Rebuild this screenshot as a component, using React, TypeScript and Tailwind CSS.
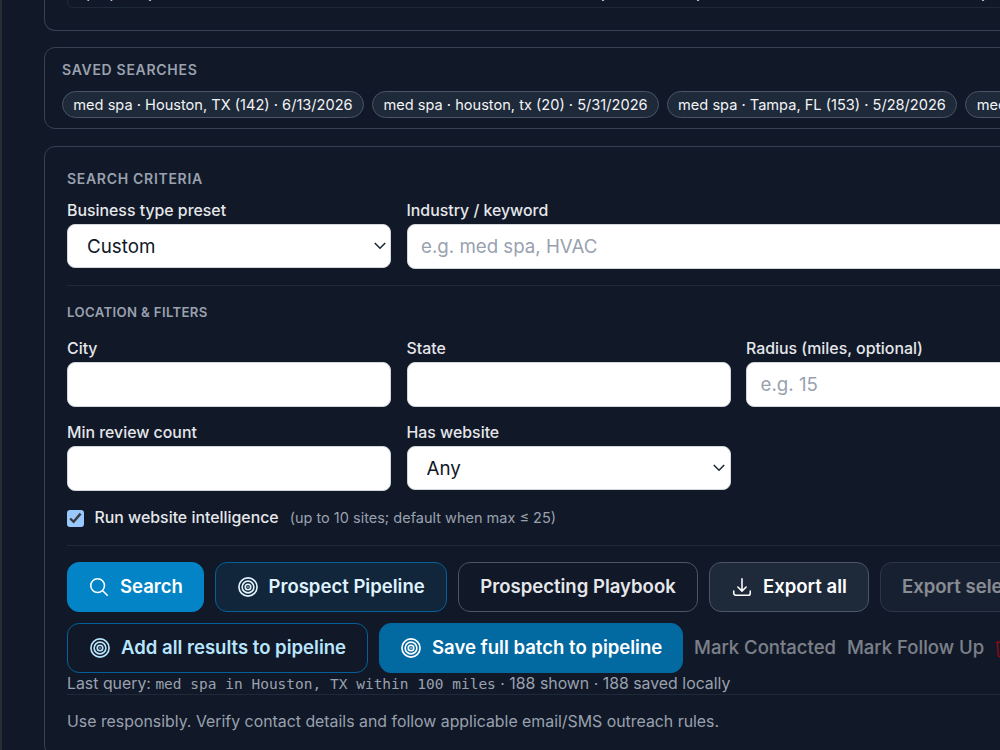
import React from "react";

const savedSearches = [
  { label: "med spa · Houston, TX (142) · 6/13/2026", width: "w-[302px]" },
  { label: "med spa · houston, tx (20) · 5/31/2026", width: "w-[287px]" },
  { label: "med spa · Tampa, FL (153) · 5/28/2026", width: "w-[290px]" },
  { label: "med spa · Austin, TX (120) · 5/27/2026", width: "w-[290px]" },
];

const TargetIcon = () => (
  <svg width="22" height="22" viewBox="0 0 24 24" fill="none" stroke="currentColor" strokeWidth="1.8" className="shrink-0">
    <circle cx="12" cy="12" r="9.9" />
    <circle cx="12" cy="12" r="6.4" />
    <circle cx="12" cy="12" r="3" />
    <circle cx="12" cy="12" r="0.9" fill="currentColor" stroke="none" />
  </svg>
);

const SearchIcon = () => (
  <svg width="22" height="22" viewBox="0 0 24 24" fill="none" stroke="currentColor" strokeWidth="1.7" strokeLinecap="round" strokeLinejoin="round" className="shrink-0">
    <path d="m21 21-5.197-5.197m0 0A7.5 7.5 0 1 0 5.196 5.196a7.5 7.5 0 0 0 10.607 10.607Z" />
  </svg>
);

const DownloadIcon = () => (
  <svg width="22" height="22" viewBox="0 0 24 24" fill="none" stroke="currentColor" strokeWidth="1.7" strokeLinecap="round" strokeLinejoin="round" className="shrink-0">
    <path d="M3 16.5v2.25A2.25 2.25 0 0 0 5.25 21h13.5A2.25 2.25 0 0 0 21 18.75V16.5M16.5 12 12 16.5m0 0L7.5 12m4.5 4.5V3" />
  </svg>
);

const TrashIcon = () => (
  <svg width="22" height="22" viewBox="0 0 24 24" fill="none" stroke="currentColor" strokeWidth="1.6" strokeLinecap="round" strokeLinejoin="round" className="shrink-0">
    <path d="m14.74 9-.346 9m-4.788 0L9.26 9m9.968-3.21c.342.052.682.107 1.022.166m-1.022-.165L18.16 19.673a2.25 2.25 0 0 1-2.244 2.077H8.084a2.25 2.25 0 0 1-2.244-2.077L4.772 5.79m14.456 0a48.108 48.108 0 0 0-3.478-.397m-12 .562c.34-.059.68-.114 1.022-.165m0 0a48.11 48.11 0 0 1 3.478-.397m7.5 0v-.916c0-1.18-.91-2.164-2.09-2.201a51.964 51.964 0 0 0-3.32 0c-1.18.037-2.09 1.022-2.09 2.201v.916m7.5 0a48.667 48.667 0 0 0-7.5 0" />
  </svg>
);

const Label = ({ children }: { children: React.ReactNode }) => (
  <span className="block h-[26px] text-[15.87px] leading-[26px] font-medium text-gray-200">{children}</span>
);

const TextField = ({ label, placeholder }: { label: string; placeholder?: string }) => (
  <label className="block">
    <Label>{label}</Label>
    <input
      type="text"
      placeholder={placeholder}
      className="block h-[45px] w-full rounded-lg border border-gray-300 bg-white px-[13.5px] text-[18.7px] text-gray-900 placeholder:text-gray-400"
    />
  </label>
);

const SelectField = ({ label, value }: { label: string; value: string }) => (
  <label className="block">
    <Label>{label}</Label>
    <span className="relative block">
      <select className="block h-[44px] w-full appearance-none rounded-lg border border-gray-300 bg-white px-[19px] pt-[2px] text-[18.8px] text-gray-900">
        <option>{value}</option>
      </select>
      <svg width="12" height="8" viewBox="0 0 12 8" fill="none" stroke="#1f2937" strokeWidth="1.6" className="pointer-events-none absolute top-[18px] right-[5.5px]">
        <path d="M0.8 1 6 6.2 11.2 1" />
      </svg>
    </span>
  </label>
);

const buttonBase = "flex h-[50px] shrink-0 items-center rounded-xl border text-[18.55px] font-semibold whitespace-nowrap";

export default function App() {
  return (
    <div className="h-[750px] w-[1000px] overflow-hidden border-l-2 border-[#282c33] bg-[#111827] font-['Inter',sans-serif] text-gray-200">
      <div className="ml-[42px] w-[1049px]">
        <div className="h-[31px] rounded-b-[11px] border border-t-0 border-gray-700 px-[22px]">
          <div className="h-[8px] overflow-hidden rounded-b-md border border-t-0 border-gray-800">
            <div className="-mt-5 flex text-[16px] leading-[24px] whitespace-nowrap text-gray-200">
              <span className="w-[32px] pl-[12px]">1,</span>
              <span className="w-[48px]">2,</span>
              <span className="w-[389px]">p</span>
              <span className="w-[95px] pl-[64px]">p</span>
              <span className="w-[285px] pl-[64px]">p</span>
              <span className="pl-[64px]">p</span>
            </div>
          </div>
        </div>

        <div className="mt-4 h-[82px] overflow-hidden rounded-[11px] border border-gray-700 pt-[11px] pl-[17px]">
          <h3 className="h-[22px] text-[14px] leading-[22px] font-semibold tracking-[0.7px] text-gray-400">SAVED SEARCHES</h3>
          <div className="mt-[10px] flex gap-2">
            {savedSearches.map((item) => (
              <button key={item.label} className={`${item.width} h-[27px] shrink-0 rounded-full border border-gray-600 bg-gray-800 text-[14.6px] leading-[24px] whitespace-nowrap text-gray-100`}>
                {item.label}
              </button>
            ))}
          </div>
        </div>

        <div className="mt-[17px] h-[610px] rounded-[11px] border border-gray-700 px-[22px] pt-[21px]">
          <h3 className="h-[22px] text-[14px] leading-[22px] font-semibold tracking-[0.7px] text-gray-400">SEARCH CRITERIA</h3>
          <div className="mt-2 grid grid-cols-3 gap-x-[15.5px]">
            <SelectField label="Business type preset" value="Custom" />
            <div className="col-span-2">
              <TextField label="Industry / keyword" placeholder="e.g. med spa, HVAC" />
            </div>
          </div>

          <div className="mt-4 border-t border-gray-800 pt-[15px]">
            <h3 className="h-[22px] text-[13.2px] leading-[22px] font-semibold tracking-[0.35px] text-gray-400">LOCATION &amp; FILTERS</h3>
            <div className="mt-[12.5px] grid grid-cols-3 gap-x-[15.5px] gap-y-[13.5px]">
              <TextField label="City" />
              <TextField label="State" />
              <TextField label="Radius (miles, optional)" placeholder="e.g. 15" />
              <TextField label="Min review count" />
              <SelectField label="Has website" value="Any" />
            </div>
            <div className="mt-[15px] flex h-[24px] items-center">
              <span className="flex size-[17px] items-center justify-center rounded-[3px] bg-[#99c8ff]">
                <svg width="13" height="12" viewBox="0 0 13 12" fill="none" stroke="#3b3b3b" strokeWidth="2.4">
                  <path d="M1.2 6.5 4.6 9.8 11.6 1.6" />
                </svg>
              </span>
              <span className="ml-[10.5px] text-[15.87px] font-medium">Run website intelligence</span>
              <span className="ml-[11px] text-[14.5px] text-gray-400">(up to 10 sites; default when max ≤ 25)</span>
            </div>
          </div>

          <div className="mt-[14.5px] border-t border-gray-800 pt-4">
            <div className="flex gap-[11px]">
              <button className={`${buttonBase} w-[136.5px] gap-[10px] border-[#0284c7] bg-[#0284c7] pl-5 text-white`}>
                <SearchIcon />
                Search
              </button>
              <button className={`${buttonBase} w-[232.5px] gap-[10px] border-[#05609a] bg-[#12263b] pl-[21px] text-sky-100`}>
                <TargetIcon />
                Prospect Pipeline
              </button>
              <button className={`${buttonBase} w-[240px] justify-center border-gray-600 text-gray-200`}>Prospecting Playbook</button>
              <button className={`${buttonBase} w-[160px] gap-[10px] border-gray-600 bg-gray-800 pl-[21px] text-white`}>
                <DownloadIcon />
                Export all
              </button>
              <button className={`${buttonBase} w-[200px] border-gray-600 bg-gray-800 pl-[21px] text-white opacity-50`}>Export selected</button>
            </div>
            <div className="mt-[11px] flex gap-[11px]">
              <button className={`${buttonBase} w-[301px] gap-[10px] border-[#05609a] pl-[21px] text-sky-200`}>
                <TargetIcon />
                Add all results to pipeline
              </button>
              <button className={`${buttonBase} w-[304px] gap-[10px] border-[#0369a1] bg-[#0369a1] pl-5 text-white`}>
                <TargetIcon />
                Save full batch to pipeline
              </button>
              <button className="text-[18.5px] font-medium whitespace-nowrap text-gray-200 opacity-50">Mark Contacted</button>
              <button className="text-[18.5px] font-medium whitespace-nowrap text-gray-200 opacity-50">Mark Follow Up</button>
              <button className="-ml-0.5 text-red-600 opacity-60">
                <TrashIcon />
              </button>
            </div>
          </div>

          <p className="h-[21px] text-[15.87px] leading-[21px] whitespace-nowrap text-gray-400">
            Last query: <span className="font-['DejaVu_Sans_Mono',monospace] text-[14.5px]">med spa in Houston, TX within 100 miles</span> · 188 shown · 188 saved locally
          </p>
          <p className="border-t border-gray-800 pt-[15px] text-[15.87px] leading-[24px] text-gray-400">
            Use responsibly. Verify contact details and follow applicable email/SMS outreach rules.
          </p>
        </div>
      </div>
    </div>
  );
}
